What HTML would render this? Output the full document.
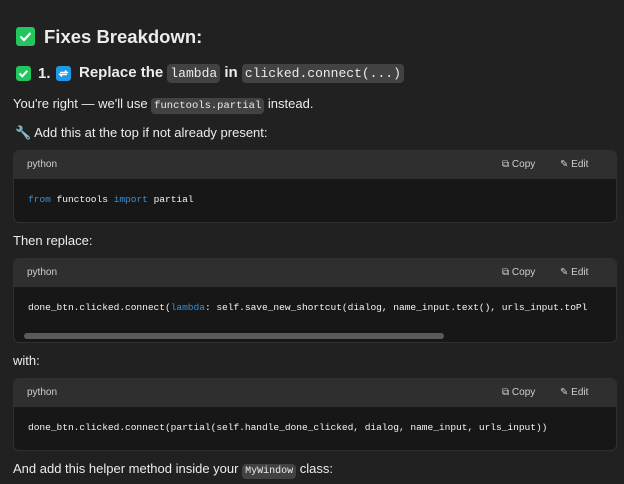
<!DOCTYPE html>
<html><head><meta charset="utf-8"><style>
body{margin:0;background:#212121;width:624px;height:484px;overflow:hidden;font-family:"Liberation Sans",sans-serif;color:#ececec;position:relative}
.a{position:absolute;white-space:nowrap}
.ic{display:inline-block;background:#22c55e;border-radius:3px;position:absolute}
.ic svg{position:absolute;left:0;top:0}
code,.mono{font-family:"Liberation Mono",monospace}
.ic2{background:#424242;border-radius:4px;padding:2px 3px}
.blk{position:absolute;left:13px;width:602px;border:1px solid #303030;border-radius:6px;overflow:hidden;background:#171717}
.hd{height:28px;background:#2f2f2f;position:relative;font-size:10px;color:#cfcfcf}
.hd .l{position:absolute;left:13px;top:8px}
.hd .c{position:absolute;left:488px;top:8px}
.hd .e{position:absolute;left:546px;top:8px}
.cd{position:absolute;left:14px;font-family:"Liberation Mono",monospace;font-size:9.6px;color:#f4f4f4;white-space:pre;letter-spacing:-0.05px}
.k{color:#3b8fd6}
</style></head><body>
<span class="ic" style="left:16px;top:27px;width:19px;height:19px"><svg width="19" height="19"><path d="M4.5 9.5l3.5 3.5 6.5-7" stroke="#fff" stroke-width="2.2" fill="none"/></svg></span>
<div class="a" style="left:44px;top:26px;font-size:18.5px;font-weight:bold">Fixes Breakdown:</div>
<span class="ic" style="left:16px;top:66px;width:15px;height:15px"><svg width="15" height="15"><path d="M3.5 7.5l2.8 2.8 5-5.5" stroke="#fff" stroke-width="2" fill="none"/></svg></span>
<div class="a" style="left:38px;top:65px;font-size:15px;font-weight:bold">1.</div>
<span style="position:absolute;left:56px;top:66px;width:15px;height:15px;background:#1e9be8;border-radius:3px"><svg width="15" height="15"><path d="M4 6.5h7l-2-2M11 8.5H4l2 2" stroke="#fff" stroke-width="1.5" fill="none"/></svg></span>
<div class="a" style="left:79px;top:64px;font-size:15px;font-weight:bold">Replace the <span class="mono ic2" style="font-weight:normal;font-size:13px">lambda</span> in <span class="mono ic2" style="font-weight:normal;font-size:13px">clicked.connect(...)</span></div>
<div class="a" style="left:13px;top:96px;font-size:13px">You're right — we'll use <span class="mono ic2" style="font-size:10.5px">functools.partial</span> instead.</div>
<div class="a" style="left:15px;top:125px;font-size:13px"><span style="color:#aaa">🔧</span> Add this at the top if not already present:</div>
<div class="blk" style="top:150px;height:71px"><div class="hd"><span class="l">python</span><span class="c">⧉ Copy</span><span class="e">✎ Edit</span></div>
<div class="cd" style="top:43px"><span class="k">from</span> functools <span class="k">import</span> partial</div></div>
<div class="a" style="left:13px;top:233px;font-size:13px">Then replace:</div>
<div class="blk" style="top:258px;height:83px"><div class="hd"><span class="l">python</span><span class="c">⧉ Copy</span><span class="e">✎ Edit</span></div>
<div class="cd" style="top:43px">done_btn.clicked.connect(<span class="k">lambda</span>: self.save_new_shortcut(dialog, name_input.text(), urls_input.toPl</div>
<div style="position:absolute;left:10px;top:74px;width:420px;height:6px;background:#5a5a5a;border-radius:3px"></div></div>
<div class="a" style="left:13px;top:353px;font-size:13px">with:</div>
<div class="blk" style="top:378px;height:71px"><div class="hd"><span class="l">python</span><span class="c">⧉ Copy</span><span class="e">✎ Edit</span></div>
<div class="cd" style="top:43px">done_btn.clicked.connect(partial(self.handle_done_clicked, dialog, name_input, urls_input))</div></div>
<div class="a" style="left:13px;top:461px;font-size:13px">And add this helper method inside your <span class="mono ic2" style="font-size:10px">MyWindow</span> class:</div>
</body></html>
